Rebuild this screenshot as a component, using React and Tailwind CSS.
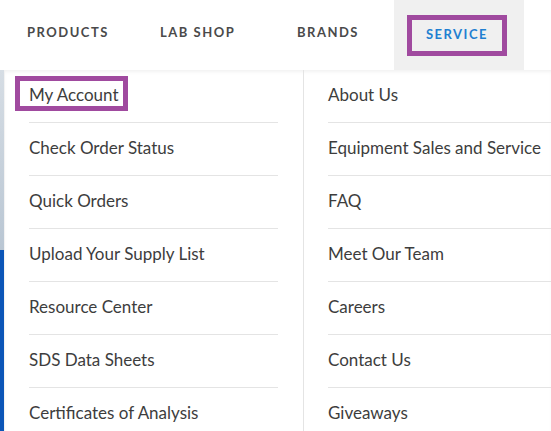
import React from 'react';

const left = [
  'My Account',
  'Check Order Status',
  'Quick Orders',
  'Upload Your Supply List',
  'Resource Center',
  'SDS Data Sheets',
  'Certificates of Analysis',
];

const right = [
  'About Us',
  'Equipment Sales and Service',
  'FAQ',
  'Meet Our Team',
  'Careers',
  'Contact Us',
  'Giveaways',
];

function Row({ label, boxed }) {
  return (
    <li className="border-b border-[#e4e4e4]">
      <a className="relative flex h-[52px] items-center pb-[3px] text-[17px] text-[#3d3d3d]">
        {boxed && (
          <span className="pointer-events-none absolute -left-[14px] top-[6px] h-[35px] w-[113px] border-[5px] border-[#a04a9f]" />
        )}
        <span className="relative">{label}</span>
      </a>
    </li>
  );
}

export default function App() {
  return (
    <div
      className="h-[431px] w-[551px] overflow-hidden bg-white"
      style={{ fontFamily: 'Lato, "Open Sans", sans-serif' }}
    >
      {/* barre de navigation */}
      <nav className="flex h-[70px] items-stretch pl-[27px] text-[13px] font-bold tracking-[1.5px] text-[#4a4a4a]">
        <span className="flex w-[133px] items-center pb-[5px]">PRODUCTS</span>
        <span className="flex w-[137px] items-center pb-[5px]">LAB SHOP</span>
        <span className="flex w-[97px] items-center pb-[5px]">BRANDS</span>
        <div className="flex w-[130px] items-start bg-[#f0f0f0] pl-[13px] pt-[15px]">
          <span className="flex h-[41px] w-[100px] items-center justify-center border-[5px] border-[#a04a9f] pb-[1px] text-[#1f7fd1]">
            SERVICE
          </span>
        </div>
      </nav>

      <div className="flex h-[361px]">
        {/* page derrière le menu */}
        <div className="flex w-[4px] flex-col">
          <div className="h-[180px] bg-gradient-to-b from-[#d6dde4] to-[#b9c6d3]" />
          <div className="flex-1 bg-[#0b55b7]" />
        </div>
        <div className="w-[1px] bg-[#f2f2f2]" />

        <div className="flex flex-1 shadow-[inset_0_3px_4px_-2px_rgba(0,0,0,0.08)]">
          <ul className="w-[299px] border-r border-[#e4e4e4] pl-[24px] pr-[25px]">
            {left.map((l, i) => (
              <Row key={l} label={l} boxed={i === 0} />
            ))}
          </ul>
          <ul className="flex-1 pl-[24px]">
            {right.map((l) => (
              <Row key={l} label={l} />
            ))}
          </ul>
        </div>
      </div>
    </div>
  );
}
